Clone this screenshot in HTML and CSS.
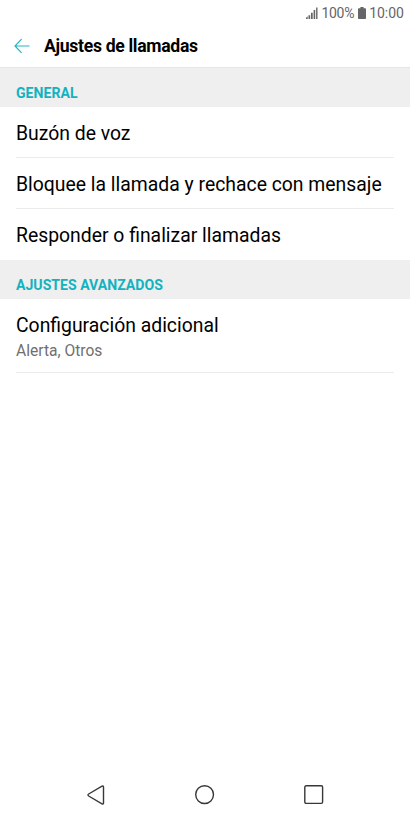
FILE: index.html
```html
<!DOCTYPE html>
<html lang="es">
<head>
<meta charset="utf-8">
<title>Ajustes de llamadas</title>
<link rel="stylesheet" href="styles.css">
</head>
<body>
<div class="status">
<svg class="signal" width="12" height="12" viewBox="0 0 12 12"><path d="M0 12V10.7L1.7 9.2V12ZM2.5 12V8.3H4.2V12ZM5 12V5.8H6.7V12ZM7.6 12V3H9.2V12ZM10.1 12V.5H11.5V12Z"/></svg>
<span class="percent">100%</span>
<svg class="battery" width="8" height="12" viewBox="0 0 8 12"><path d="M2.4 0h3.2v1.2H7.2q.8 0 .8.8v9.2q0 .8-.8.8H.8q-.8 0-.8-.8V2q0-.8.8-.8h1.6z"/></svg>
<span class="clock">10:00</span>
</div>
<header class="bar">
<svg class="back" width="16" height="16" viewBox="0 0 16 16"><path d="M15.5 8H1.2M7.6 1.2L1 8l6.6 6.8"/></svg>
<h1>Ajustes de llamadas</h1>
</header>
<main>
<h2>GENERAL</h2>
<ul>
<li><span>Buzón de voz</span></li>
<li><span>Bloquee la llamada y rechace con mensaje</span></li>
<li><span>Responder o finalizar llamadas</span></li>
</ul>
<h2>AJUSTES AVANZADOS</h2>
<ul>
<li class="double"><span>Configuración adicional</span><small>Alerta, Otros</small></li>
</ul>
</main>
<nav>
<svg width="20" height="20" viewBox="0 0 20 20"><path d="M16 1.2q1.5-.7 1.5.8v16q0 1.5-1.5.8L2.7 11q-1.5-1 0-2z"/></svg>
<svg width="20" height="20" viewBox="0 0 20 20"><circle cx="9.6" cy="9.6" r="8.9"/></svg>
<svg width="20" height="20" viewBox="0 0 20 20"><rect x=".8" y=".8" width="17.8" height="17.6" rx="1.3"/></svg>
</nav>
</body>
</html>
```
FILE: styles.css
```css
* { box-sizing: border-box; }
body { margin: 0; height: 820px; display: flex; flex-direction: column; background: #fff; color: #000; font-family: Roboto, sans-serif; }
.status { height: 25px; display: flex; justify-content: flex-end; align-items: center; padding-right: 6px; font-size: 14px; color: #666; }
.status svg { fill: #666; }
.percent { margin: 0 4px 0 3px; font-size: 14px; letter-spacing: -.3px; }
.clock { margin-left: 3px; }
.bar { height: 43px; display: flex; align-items: center; padding-left: 14px; border-bottom: 1px solid #e6e6e6; }
.back { fill: none; stroke: #22b6c1; stroke-width: 1.2; }
h1 { margin: 0 0 0 14px; font-size: 17.6px; font-weight: 700; line-height: 24px; letter-spacing: -.31px; }
h2 { margin: 0; height: 39px; padding: 12px 16px 0; background: #efefef; color: #14b2bf; font-size: 14.1px; line-height: 26px; font-weight: 700; }
ul { list-style: none; margin: 0; padding: 0 16px; }
li { height: 51px; padding-top: 4px; display: flex; align-items: center; border-bottom: 1px solid #ebebeb; font-size: 19.36px; line-height: 26px; white-space: nowrap; }
li:last-child:not(.double) { padding-top: 2px; border-bottom: 0; }
.double { height: 74px; padding-top: 6px; flex-direction: column; align-items: flex-start; justify-content: center; }
small { font-size: 15.6px; line-height: 25px; color: #707070; }
nav { height: 50px; margin-top: auto; display: flex; justify-content: center; align-items: center; gap: 89px; }
nav svg { fill: none; stroke: #383838; stroke-width: 1.4; }
```
